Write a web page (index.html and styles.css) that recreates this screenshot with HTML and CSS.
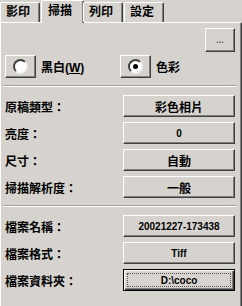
FILE: index.html
```html
<!DOCTYPE html>
<html lang="zh-Hant">
<head>
    <meta charset="UTF-8">
    <title>掃描</title>
    <link rel="stylesheet" href="styles.css">
</head>
<body>
    <div class="tabs">
        <div class="tab">影印</div>
        <div class="tab active">掃描</div>
        <div class="tab">列印</div>
        <div class="tab">設定</div>
    </div>

    <div class="panel">
        <div class="top-row">
            <button class="btn more">...</button>
        </div>

        <div class="radio-row">
            <div class="radio-item">
                <button class="btn radio"><span class="dot"></span></button>
                <span class="radio-label">黑白(<u>W</u>)</span>
            </div>
            <div class="radio-item">
                <button class="btn radio"><span class="dot checked"></span></button>
                <span class="radio-label">色彩</span>
            </div>
        </div>

        <div class="sep"></div>

        <div class="rows">
            <div class="row"><span class="label">原稿類型：</span><button class="btn value">彩色相片</button></div>
            <div class="row"><span class="label">亮度：</span><button class="btn value num">0</button></div>
            <div class="row"><span class="label">尺寸：</span><button class="btn value">自動</button></div>
            <div class="row"><span class="label">掃描解析度：</span><button class="btn value">一般</button></div>
        </div>

        <div class="sep"></div>

        <div class="rows">
            <div class="row"><span class="label">檔案名稱：</span><button class="btn value num">20021227-173438</button></div>
            <div class="row"><span class="label">檔案格式：</span><button class="btn value num">Tiff</button></div>
            <div class="row"><span class="label">檔案資料夾：</span><button class="btn value num focus"><span class="focus-ring">D:\coco</span></button></div>
        </div>
    </div>
</body>
</html>
```

FILE: styles.css
```css
body {
    margin: 0;
    background-color: #d6d3ce;
    font-family: "Liberation Sans", "Noto Sans CJK TC", sans-serif;
    font-size: 12px;
    font-weight: bold;
    color: #000;
    width: 242px;
    height: 306px;
    overflow: hidden;
}

.tabs {
    display: flex;
    height: 22px;
    align-items: flex-end;
    position: relative;
    z-index: 1;
}

.tab {
    width: 40px;
    height: 20px;
    line-height: 19px;
    border: 1px solid;
    border-color: #fff #404040 transparent #fff;
    box-shadow: inset -1px 0 #808080;
    border-radius: 2px 2px 0 0;
    border-bottom: none;
    box-sizing: border-box;
    text-indent: 5px;
}

.tab.active {
    height: 23px;
    margin: 0 -1px -1px -1px;
    width: 43px;
    background-color: #d6d3ce;
    line-height: 20px;
    text-indent: 6px;
}

.tab + .tab {
    margin-left: 1px;
}

.tab.active + .tab {
    margin-left: 0;
}

.panel {
    border-top: 1px solid #fff;
    border-left: 1px solid #fff;
    border-right: 1px solid #404040;
    box-shadow: inset -1px 0 #808080;
    height: 283px;
    padding: 0 6px 0 4px;
}

.btn {
    font: inherit;
    color: #000;
    background-color: #d6d3ce;
    border: 1px solid;
    border-color: #fff #404040 #404040 #fff;
    box-shadow: inset -1px -1px #808080;
    padding: 0;
    box-sizing: border-box;
    display: flex;
    align-items: center;
    justify-content: center;
}

.top-row {
    display: flex;
    justify-content: flex-end;
    padding-top: 5px;
}

.more {
    width: 30px;
    height: 24px;
    font-size: 9px;
    color: #555;
}

.radio-row {
    display: flex;
    margin-top: 2px;
    height: 24px;
    align-items: center;
}

.radio-item {
    display: flex;
    align-items: center;
    gap: 5px;
    width: 118px;
}

.radio {
    width: 31px;
    height: 23px;
}

.dot {
    width: 15px;
    height: 15px;
    border-radius: 50%;
    background: #fff;
    border: 2px solid;
    border-color: #404040 #f0f0f0 #f0f0f0 #404040;
    box-sizing: border-box;
    position: relative;
}

.dot.checked::after {
    content: "";
    position: absolute;
    left: 3px;
    top: 3px;
    width: 5px;
    height: 5px;
    border-radius: 50%;
    background: #000;
}

.radio-label u {
    text-decoration: underline;
}

.sep {
    border-top: 1px solid #a0a0a0;
    border-bottom: 1px solid #fff;
    margin: 7px -2px 8px -2px;
}

.rows {
    display: flex;
    flex-direction: column;
    gap: 5px;
}

.row {
    display: flex;
    align-items: center;
    justify-content: space-between;
}

.value {
    width: 112px;
    height: 22px;
}

.num {
    font-size: 10px;
}

.focus {
    border: 1px solid #000;
    box-shadow: inset 1px 1px #fff, inset -1px -1px #404040, inset -2px -2px #808080;
    padding: 3px;
}

.focus-ring {
    flex: 1;
    align-self: stretch;
    border: 1px dotted #555;
    display: flex;
    align-items: center;
    justify-content: center;
}
```
